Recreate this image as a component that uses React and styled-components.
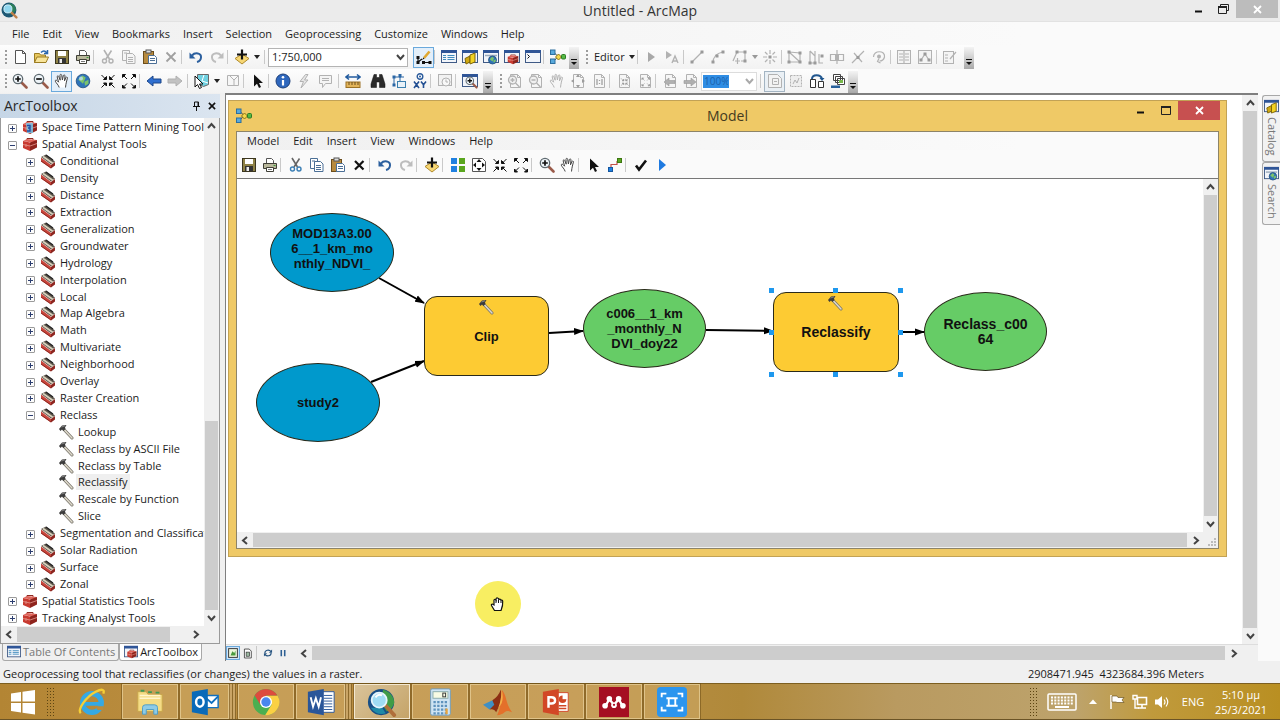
import React from "react";
import styled, { createGlobalStyle, css } from "styled-components";

const Global = createGlobalStyle`
  * { box-sizing: border-box; }
  body { margin: 0; background: #f0f0f0; }
  body, button, input { font-family: "Open Sans", "Noto Sans", sans-serif; font-size: 11px; line-height: 16px; color: #1c1c1c; }
  button { border: 0; padding: 0; margin: 0; background: none; }
  svg { display: block; flex: none; }
`;

/* ---------- icons ---------- */

const G = "#b2b2b2";
const K = "#111";

const page = (stroke = "#555", fill = "#fff") => (
  <path d="M3.5 1.5h7l3 3v10h-10z M10.5 1.5v3h3" fill={fill} stroke={stroke} />
);
const win = (body) => (
  <>
    <rect x="0.5" y="1.5" width="15" height="12" fill="#f2f5fa" stroke="#3f5a86" />
    <rect x="0" y="1" width="16" height="3" fill="#2f5597" />
    {body}
  </>
);
const lens = (sign) => (
  <>
    <path d="M9.5 9.5l5 5" stroke="#9a5b4a" strokeWidth="2.6" strokeLinecap="round" />
    <circle cx="6" cy="6" r="4.7" fill="#eef4f8" stroke="#5f6a70" strokeWidth="1.3" />
    <path d={sign === "+" ? "M3.2 6h5.6M6 3.2v5.6" : "M3.2 6h5.6"} stroke={K} strokeWidth="1.7" />
  </>
);
const hand = (stroke = "#444", fill = "#fff") => (
  <path
    d="M5.2 14.5C4.6 12 2 10 1.3 8.2c-.3-1 .9-1.5 1.7-.6l1.6 1.6L3.2 4c-.3-1.300 1.200-1.700 1.600-.4l1.400 3.600L6 2.300c0-1.300 1.500-1.300 1.700 0l.7 4.700.9-4.300c.3-1.200 1.800-.9 1.700.3l-.5 4.800 1.400-3.300c.5-1 1.800-.5 1.500.6-.6 2.600-1.500 5-1.900 9.400"
    fill={fill} stroke={stroke} strokeLinejoin="round"
  />
);
const cut = (a, b) => (
  <>
    <path d="M4 1l5.500 9M11.500 1.500L6 10" stroke={a} strokeWidth="1.600" fill="none" />
    <circle cx="4.500" cy="12" r="2" fill="none" stroke={b} strokeWidth="1.400" />
    <circle cx="11" cy="12" r="2" fill="none" stroke={b} strokeWidth="1.400" />
  </>
);
const copy = (s, f) => (
  <>
    <path d="M1.500 1.500h7v10h-7z" fill={f} stroke={s} />
    <path d="M5.500 4.500h6l2.500 2.500v7.500h-8.500z" fill={f} stroke={s} />
    <path d="M7 8.500h5M7 10.500h5M7 12.500h5M3 4h3" stroke={s} />
  </>
);
const arrows4 = (dir, c = K) =>
  dir === "in" ? (
    <path fill={c} stroke={c} d="M1.500 2l3.500 3.500M14.500 2L11 5.500M1.500 14.500L5 11M14.500 14.500L11 11M6.500 3.500v3h-3zM9.500 3.500v3h3zM6.500 13v-3h-3zM9.500 13v-3h3z" />
  ) : (
    <path fill={c} stroke={c} d="M6 6L3 3M10 6l3-3M6 10.500l-3 3M10 10.500l3 3M1.500 4.500v-3h3zM14.500 4.500v-3h-3zM1.500 12v3h3zM14.500 12v3h-3z" />
  );
const curl = (c, flip) => (
  <g transform={flip ? "translate(16 0) scale(-1 1)" : undefined}>
    <path d="M4 6.500C7 3 13.500 4 13 8.500 12.800 11 11 12.500 9 13" fill="none" stroke={c} strokeWidth="2" />
    <path d="M1.500 3.500v6h6z" fill={c} />
  </g>
);
const nodeLink = (
  <>
    <path d="M4 3.500L8 7.500 4 12M10 8h3" stroke="#444" fill="none" />
    <rect x="0.500" y="1" width="4.500" height="4.500" fill="#58a9dc" stroke="#2c6f9e" />
    <rect x="0.500" y="10" width="4.500" height="4.500" fill="#58a9dc" stroke="#2c6f9e" />
    <path d="M8.500 5l3 3-3 3-3-3z" fill="#f5d84c" stroke="#8a7514" />
    <rect x="11.500" y="5.500" width="4" height="4.500" rx="1" fill="#55b945" stroke="#2d7a24" />
  </>
);
const box = (
  <>
    <path d="M5 4V2.500h6V4" fill="none" stroke="#8c2b22" />
    <path d="M1 5l4-2 10 1-3 3z" fill="#e0665c" />
    <path d="M1 5l7 1.500V15l-7-3z" fill="#c83a30" />
    <path d="M8 6.500L15 4v7.500L8 15z" fill="#8f241d" />
    <path d="M1 8.500l7 1.500 7-2.500M4 8v3" stroke="#e59a90" strokeWidth=".8" fill="none" />
  </>
);
const arrowPtr = (c = K) => <path d="M4 1.500v12l3-2.800 2 4.300 2-1-2-4h4z" fill={c} />;
const globe = (x, y, r) => (
  <>
    <circle cx={x} cy={y} r={r} fill="#2f74b8" stroke="#1f4c7c" strokeWidth="0.800" />
    <path d={`M${x - r * 0.7} ${y - r * 0.2}l${r * 0.6} ${-r * 0.6} ${r * 0.5} ${r * 0.3} ${-r * 0.4} ${r * 0.9}zM${x + r * 0.2} ${y + r * 0.1}l${r * 0.6} ${-r * 0.3} 0 ${r * 0.6} ${-r * 0.5} ${r * 0.3}z`} fill="#7cc36a" />
  </>
);
const gpage = (inner) => (
  <>
    {page(G, "#f6f6f6")}
    {inner}
  </>
);
const sketch = (d) => <path d={d} fill="none" stroke={G} strokeWidth="1.200" />;
const dot = (x, y, c = "#9a9a9a") => <rect key={`${x}-${y}`} x={x - 1.500} y={y - 1.500} width="3" height="3" fill={c} />;

const icons = {
  newDoc: page("#555"),
  open: (
    <>
      <path d="M1.500 13.500v-9h5l1 1.500h5v7.500z" fill="#e7c75e" stroke="#9c7c22" />
      <path d="M1.500 13.500L4 8h11.500l-2.500 5.500z" fill="#f8e49a" stroke="#9c7c22" />
      <path d="M8 3.500c2-2 4-2 5.500 0M14.500 1v3.500H11" fill="none" stroke="#2a66ad" strokeWidth="1.500" />
    </>
  ),
  save: (
    <>
      <rect x="1.500" y="1.500" width="13" height="13" fill="#8f8246" stroke="#3b3620" />
      <rect x="4" y="2" width="8" height="5" fill="#fff" />
      <rect x="4" y="9" width="8" height="5" fill="#333" />
      <rect x="5.500" y="10" width="2.500" height="4" fill="#eee" />
    </>
  ),
  print: (
    <>
      <path d="M4.500 6V1.500h5l2 2V6" fill="#fff" stroke="#555" />
      <path d="M1.500 6.500h13v5h-13z" fill="#b9b89c" stroke="#3f3f36" />
      <path d="M4.500 10.500h7v4h-7z" fill="#fff" stroke="#3f3f36" />
      <path d="M6 12.500h4" stroke="#777" />
      <rect x="11.500" y="8" width="2" height="1" fill="#3c9a3c" />
    </>
  ),
  cut: cut("#666", "#3c7fb5"),
  cutOff: cut(G, G),
  copy: copy("#4b6f96", "#fff"),
  copyOff: copy(G, "#f5f5f5"),
  paste: (
    <>
      <rect x="1.500" y="2.500" width="10" height="12" fill="#b88b3e" stroke="#6b4d1b" />
      <rect x="4" y="1" width="5" height="3" fill="#ddd" stroke="#555" />
      <path d="M6.500 6.500h6l2 2v6h-8z" fill="#fff" stroke="#4b6f96" />
      <path d="M8 9.500h5M8 11.500h5" stroke="#4b6f96" />
    </>
  ),
  del: <path d="M4 4l8.500 8.500M12.500 4L4 12.500" stroke={K} strokeWidth="2.200" />,
  delOff: <path d="M3.500 3.500l9 9M12.500 3.500l-9 9" stroke="#a0a0a0" strokeWidth="1.800" />,
  undo: curl("#2b5f9e"),
  redo: curl("#bdbdbd", true),
  addData: (
    <>
      <path d="M8 5l7 4.500L8 15 1 9.500z" fill="#f7d774" stroke="#b08a2c" />
      <path d="M8 0.500v10M3 5.500h10" stroke={K} strokeWidth="2.200" />
    </>
  ),
  edTool: (
    <>
      <path d="M2 9v4.500M2 13l4-3M7 13.500h7" stroke={K} strokeWidth="1.200" />
      {dot(2, 8.500, K)}{dot(2, 13.500, K)}{dot(7.500, 13.500, K)}{dot(14, 13.500, K)}
      <path d="M8 9L13.500 2.500" stroke="#e0a830" strokeWidth="2.600" />
      <path d="M6 11l1.500-2.500 1 1z" fill={K} />
    </>
  ),
  toc: win(<path d="M2 6.500h3M2 8.500h3M2 10.500h3M6.500 6.500h7M6.500 8.500h7M6.500 10.500h7" stroke="#3f8bbd" />),
  catalog: win(<><path d="M3 9.500l5-2.500v6l-4 2z" fill="#d0a911" stroke="#7e6508" /><path d="M8 6l5-2v9l-5 2z" fill="#f2d222" stroke="#7e6508" /></>),
  search: win(<><path d="M2 6.500h12" stroke="#9ab" strokeWidth="1.500" />{globe(9.500, 11, 4)}</>),
  tbxWin: win(<g transform="translate(3 4) scale(.75)">{box}</g>),
  python: win(<path d="M2.500 5.500l2 2-2 2" stroke={K} fill="none" />),
  model: nodeLink,
  ptrOff: <path d="M5 3v10l7-5z" fill="#a8a8a8" />,
  ptrA: <><path d="M2 2v8l6-4z" fill={G} /><path d="M8 14l3-7 3 7M9 12h4" stroke={G} strokeWidth="1.400" fill="none" /></>,
  line: <>{sketch("M3 13L13 3")}{dot(3, 13)}{dot(13, 3)}</>,
  arc: <>{sketch("M3 14C3 8 7 4 13 3")}{dot(3, 13)}{dot(7, 7)}{dot(13, 3)}</>,
  poly: <>{sketch("M2 12L6 3h8v9h-4M6.500 9v6M4 12h5")}{dot(6, 3)}{dot(14, 3)}{dot(14, 12)}</>,
  star: <>{sketch("M8 1v4M8 11v4M1 8h4M11 8h4M3 3l2.500 2.500M13 3l-2.500 2.500M3 13l2.500-2.500M13 13l-2.500-2.500")}{dot(8, 8)}</>,
  edV: <>{sketch("M2 3l11 1v9H2zM2 3l11 10")}{dot(2, 3)}{dot(13, 4)}{dot(13, 13)}{dot(2, 13)}</>,
  resh: <>{sketch("M2 2v12h5V2M2 2l5 5M11 5v9h4")}{dot(2, 14)}{dot(7, 14)}{dot(14, 7)}</>,
  cutP: <>{sketch("M1.500 5.500h13v6h-13zM8 1v14")}<rect x="6" y="6" width="4" height="5" fill={G} /></>,
  split: <>{sketch("M2 14L14 2M4 4l8 9")}{dot(8, 8.500)}</>,
  rot: <>{sketch("M2.500 8c0-7 12-7 11 0-1 4-5 4-5 4M8 9.500L6.500 12.500 9.500 14")}<circle cx="8" cy="7.500" r="2" fill={G} /></>,
  attr: <><rect x="1.500" y="1.500" width="13" height="13" fill="#f4f4f4" stroke={G} />{sketch("M3 5h4M3 8h4M3 11h4M9 5h4M9 8h4M9 11h4M8 2v12")}</>,
  skProp: <><rect x="1.500" y="1.500" width="13" height="13" fill="#f4f4f4" stroke={G} />{sketch("M4 11l4-6 4 6")}{dot(4, 11)}{dot(8, 5)}{dot(12, 11)}</>,
  createF: <><rect x="1.500" y="2.500" width="10" height="12" fill="#f4f4f4" stroke={G} />{sketch("M3 6h3M3 9h3M3 12h3M8 10l6-7")}</>,
  zoomIn: lens("+"),
  zoomOut: lens("-"),
  hand: hand(),
  globe: <>{globe(8, 8, 6.800)}<circle cx="6" cy="5.500" r="2" fill="#bfe0f4" opacity=".8" /></>,
  fixIn: arrows4("in"),
  fixOut: arrows4("out"),
  back: <path d="M1 8l6-5v3h8v4H7v3z" fill="#2f6fd0" stroke="#1d4688" />,
  fwdOff: <path d="M15 8L9 3v3H1v4h8v3z" fill="#c2c2c2" stroke="#b0b0b0" />,
  selF: (
    <>
      <path d="M3.500 1.500h11v10l-5 2-6-3z" fill="#6fd0e0" stroke="#666" />
      <path d="M10 2l-2 6 6 2" stroke="#fff" fill="none" />
      <path d="M1 3v11l2.500-2.500L5.500 15.500l2-1-2-3.500H9z" fill="#fff" stroke={K} />
    </>
  ),
  clrSel: <path d="M2.500 2.500h11v10h-11zM5 3l4 4 4-4M9 7v5" fill="#f6f6f6" stroke={G} />,
  ptr: arrowPtr(),
  info: <><circle cx="8" cy="8" r="7" fill="#2e67bd" stroke="#1c3f7a" /><path d="M8 7v5.500" stroke="#fff" strokeWidth="2.200" /><circle cx="8" cy="4.300" r="1.300" fill="#fff" /></>,
  bolt: <path d="M9.500 1.500L4 8.500h3.500L5 15l7-8H8.500l3.500-5.500z" fill="#e6e6e6" stroke={G} />,
  html: <path d="M2.500 2.500h12v8h-6l-3 4v-4h-3zM5 5.500h7M5 7.500h7" fill="#f4f4f4" stroke={G} />,
  measure: <><path d="M1 4h14M4 1.500L1 4l3 2.500M12 1.500L15 4l-3 2.500" stroke="#225b9e" strokeWidth="1.600" fill="none" /><rect x="1" y="9" width="14" height="5.500" fill="#e2b45a" stroke="#9b7124" /><path d="M4 9v3M7 9v3M10 9v3M13 9v3" stroke="#6b4d1b" /></>,
  find: <path d="M4 1.500h2.500v3h3v-3H12l3 9.500v3.500H9.500V9h-3v5.500H1V11z" fill="#2a2a2a" stroke="#111" strokeWidth=".5" />,
  route: <><path d="M3 12V4h6v4M9 2v3M9 4h4" stroke="#2a66a5" fill="none" /><rect x="6.500" y="8.500" width="8" height="6" fill="#e8f1f8" stroke="#3b7fae" />{dot(3, 4, "#2a66a5")}{dot(9, 2.500, "#2a66a5")}{dot(3, 12, "#2a66a5")}</>,
  xy: <><circle cx="8" cy="3.500" r="2.800" fill="#fff" stroke="#2a5b9c" strokeWidth="1.400" /><circle cx="8" cy="3.500" r="1" fill="#2a5b9c" /><path d="M2 8.500l5 6.500M7 8.500L2 15M9 8.500l2.500 3.200L14 8.500M11.500 11.500V15" stroke="#224f92" strokeWidth="1.600" fill="none" /></>,
  time: <><rect x="1.500" y="1.500" width="13" height="11" fill="#f2f2f2" stroke={G} /><circle cx="9" cy="9" r="4" fill="#f8f8f8" stroke={G} /><path d="M9 6.500V9h2" stroke={G} fill="none" /></>,
  viewer: win(<g transform="translate(3 3) scale(.8)">{lens("+")}</g>),
  lZin: gpage(<><circle cx="5.500" cy="7" r="4" fill="#f0f0f0" stroke={G} strokeWidth="1.300" /><path d="M3.500 7h4M5.500 5v4M8.500 10l4 4" stroke={G} strokeWidth="1.400" /></>),
  lZout: gpage(<><circle cx="5.500" cy="7" r="4" fill="#f0f0f0" stroke={G} strokeWidth="1.300" /><path d="M3.500 7h4M8.500 10l4 4" stroke={G} strokeWidth="1.400" /></>),
  lHand: hand(G, "#f6f6f6"),
  lFull: gpage(<path d="M8 1l2 3H6zM8 15l2-3H6zM1 8l3-2v4zM15 8l-3-2v4z" fill="#9c9c9c" />),
  l11: gpage(<path d="M6 6v6M11 6v6M8.500 7v1M8.500 10v1" stroke="#a0a0a0" strokeWidth="1.300" />),
  lIn: gpage(<g transform="translate(4 4) scale(.6)">{arrows4("in", "#999")}</g>),
  lOut: gpage(<g transform="translate(4 4) scale(.6)">{arrows4("out", "#999")}</g>),
  lBack: gpage(<path d="M2 9l5-4v2.500h6v3H7V13z" fill="#b0b0b0" stroke="#999" strokeWidth=".6" />),
  lFwd: gpage(<path d="M13 9L8 5v2.500H1v3h7V13z" fill="#b0b0b0" stroke="#999" strokeWidth=".6" />),
  draft: <><path d="M1.500 1.500h9l4 4v9h-13z" fill="#f3f3f3" stroke={G} /><path d="M5.500 5.500h6v6h-6zM7 8.500h3" stroke={G} fill="none" /></>,
  focus: <><rect x="2.500" y="2.500" width="11" height="11" fill="#eee" stroke={G} strokeDasharray="2 1" /><path d="M5 11l2-4 2 3 2-5" stroke={G} fill="none" /></>,
  change: <><path d="M3 6c0-5 9-5 10 0" fill="none" stroke="#20568e" strokeWidth="2" /><path d="M10.500 5h5L13 8z" fill="#20568e" /><path d="M1.500 6.500h5v8h-5zM9.500 8.500h5v6h-5z" fill="#fff" stroke="#333" /></>,
  ddp: <><path d="M3.500 1.500h7v6h-7zM5.500 3.500h7v6h-7zM7.500 5.500h7v6h-7z" fill="#fff" stroke="#444" /><path d="M9 7h4v3H9z" fill="#78b84a" /><path d="M1 12.500h9v2.500H1z" fill="#27609b" /></>,
  auto: <><path d="M1 1h6v6H1zM1 9h6v6H1z" fill="#2080e0" /><path d="M9 1h6v6H9zM9 9h6v6H9z" fill="#5aa61e" /></>,
  full: <><path d="M1.500 1.500h10l3 3v10h-13z" fill="#fff" stroke="#555" /><path d="M8 2l2.500 3h-5zM8 14l2.500-3h-5zM2 8l3-2.500v5zM14 8l-3-2.500v5z" fill={K} /></>,
  connect: <><path d="M4 12V7.500h6V4" stroke="#c2504a" fill="none" strokeWidth="1.200" /><rect x="1.500" y="10.500" width="4" height="4" fill="#2080e0" stroke="#1557a0" /><rect x="10.500" y="1.500" width="4" height="4" fill="#5aa61e" stroke="#3c7611" /></>,
  check: <path d="M3 8.500l3 4L13 3.500" stroke={K} strokeWidth="2.600" fill="none" />,
  run: <path d="M5 2v12l7-6z" fill="#1f7ae0" />,
  box,
  boxStp: <>{box}<path d="M4 4h7v10H5z" fill="#7bc8e8" opacity=".85" /><path d="M5 6.500h3v2.500H6h2v3H5" stroke="#1e50a8" strokeWidth="1.400" fill="none" /></>,
  set: (
    <>
      <path d="M1 4l5-2.500 9 7-4 3z" fill="#5d564c" />
      <path d="M3 3.500l10 7" stroke="#d8d2bd" strokeWidth="1.600" />
      <path d="M6 2l7 5" stroke="#222" strokeWidth="1.200" />
      <path d="M1 4.500L11 12v3.500L1 8.500z" fill="#c8463c" />
      <path d="M11 12l4-3v3.500l-4 3z" fill="#8d2620" />
      <path d="M1 8l10 7" stroke="#7e1d17" strokeWidth=".8" />
    </>
  ),
  hammer: (
    <>
      <path d="M6 5.500l8 8.500" stroke="#77736a" strokeWidth="3" strokeLinecap="round" />
      <path d="M6.500 6l7.500 8" stroke="#dedacb" strokeWidth="1.500" strokeLinecap="round" />
      <path d="M1 5l3-3.500L8.500 1 7 3.500 7.500 5 5.500 7 4 5.500 2.500 7z" fill="#3c3c3c" />
      <path d="M3.500 3L7 1.800" stroke="#9a9a9a" strokeWidth=".8" />
    </>
  ),
  arcmap: (
    <>
      <circle cx="7.500" cy="7.500" r="7" fill="#1d5874" />
      <path d="M8 1c4 1 6 3 6 7l-4 4-3-2z" fill="#2c7f5a" />
      <path d="M9.500 9.500l5 5" stroke="#c0804a" strokeWidth="2.200" strokeLinecap="round" />
      <circle cx="6.500" cy="6.500" r="3.800" fill="#8fd6ee" stroke="#dcf3fb" strokeWidth=".8" />
    </>
  ),
  refresh: <><path d="M3 8c0-5 7-6 9.500-2.500M13 8c0 5-7 6-9.500 2.500" stroke="#24527f" strokeWidth="1.800" fill="none" /><path d="M14.500 2.500v5h-5zM1.500 13.500v-5h5z" fill="#24527f" /></>,
  pause: <path d="M4 3h2.500v10H4zM9.500 3H12v10H9.500z" fill="#2d5f93" />,
  dataView: <><rect x="1" y="1" width="14" height="14" fill="#eef6dc" stroke="#333" strokeWidth="1.500" /><path d="M4 12l3-7 3 3 2-4v8z" fill="#4a9a3e" /></>,
  layView: <><path d="M3.500 1.500h7l3 3v10h-10z" fill="#fff" stroke="#444" strokeWidth="1.300" /><rect x="6" y="6" width="5" height="6" fill="#9ab8a0" stroke="#333" /></>,
};

const Icon = ({ name, size = 16 }) => (
  <svg width={size} height={size} viewBox="0 0 16 16" aria-hidden="true">{icons[name]}</svg>
);

const Chevron = ({ dir = "down", color = "#444" }) => {
  const d = { up: "M1 6l3.500-4L8 6", down: "M1 2l3.500 4L8 2", left: "M6 1L2 4.500 6 8", right: "M3 1l4 3.500L3 8" }[dir];
  return <svg width="9" height="9" viewBox="0 0 9 9"><path d={d} fill="none" stroke={color} strokeWidth="2" /></svg>;
};

/* ---------- frame ---------- */

const Shell = styled.div`
  min-height: 100vh; display: flex; flex-direction: column; overflow: hidden; background: #f0f0f0;
`;
const TitleBar = styled.header`
  height: 22px; flex: none; background: #ebebeb; border-bottom: 1px solid #e2e2e2;
  display: grid; grid-template-columns: 1fr auto 1fr; align-items: center;
  h1 { margin: 0; font-size: 14px; font-weight: 400; line-height: 20px; color: #333; }
`;
const TitleIcon = styled.div`padding-left: 1px;`;
const WinButtons = styled.div`display: flex; justify-content: flex-end; align-self: start; margin-right: ${(p) => p.$end}px;`;
const WinButton = styled.button`
  width: ${(p) => p.$w || 24}px; height: ${(p) => p.$h || 18}px; background: ${(p) => p.$bg || "none"};
  display: flex; align-items: center; justify-content: center;
`;
const MenuBar = styled.nav`
  display: flex; align-items: center; flex: none; gap: ${(p) => p.$gap}px; height: ${(p) => p.$h}px; padding-left: ${(p) => p.$start}px;
  background: linear-gradient(90deg, #f0f0f0, #fafafa 80%);
`;
const MenuItem = styled.button`font-size: 11px; line-height: 16px;`;
const ToolRow = styled.div`
  display: flex; align-items: center; flex: none; height: 24px; background: #fafafa;
`;
const Band = styled.div`
  display: flex; align-items: center; height: 24px;
  background: linear-gradient(#fdfdfd, #f2f2f2);
`;
const Tool = styled.button`
  width: 21px; height: 21px; display: flex; align-items: center; justify-content: center;
  ${(p) => p.$on && css`background: ${p.$dim ? "#eaf0f5" : "#e3effa"}; box-shadow: inset 0 0 0 1px ${p.$dim ? "#a3b4c2" : "#6aa9dc"};`}
`;
const DropCaret = styled.button`
  width: 10px; height: 21px; display: flex; align-items: center; justify-content: center;
  &::after { content: ""; border: 3px solid transparent; border-top: 4px solid ${(p) => p.$c || "#222"}; border-bottom: 0; }
`;
const Sep = styled.span`width: 4px; height: 14px; border-left: 1px solid #c9c9c9; margin-left: ${(p) => p.$ml || 0}px;`;
const ModelTools = styled.div`
  display: flex; align-items: center; flex: none; height: 28px; padding: 2px 0 0 1px; background: #fafafa;
  ${Sep} { width: 5px; }
`;
const Gap = styled.span`width: ${(p) => p.$w}px; flex: none;`;
const Grip = styled.span`
  width: 2px; height: 14px; margin: 0 ${(p) => p.$r}px 0 ${(p) => p.$l}px;
  background: repeating-linear-gradient(#9c9c9c 0 2px, transparent 2px 4px);
`;
const OverflowButton = styled.button`
  width: 10px; height: 22px; align-self: flex-end; margin-left: ${(p) => p.$ml || 0}px;
  background: linear-gradient(#f4f4f4, #a9a9a9);
  display: flex; align-items: flex-end; justify-content: center; padding-bottom: 3px;
`;
const Overflow = ({ ml }) => (
  <OverflowButton $ml={ml} aria-label="Toolbar options">
    <svg width="6" height="7" viewBox="0 0 6 7"><path d="M0 0.500h6" stroke="#111" /><path d="M0 3h6L3 6z" fill="#111" /></svg>
  </OverflowButton>
);
const Combo = styled.div`
  width: ${(p) => p.$w}px; height: 19px; display: flex; align-items: center; background: #fff;
  border: 1px solid ${(p) => (p.$dim ? "#dcdcdc" : "#b4b4b4")}; margin: 0 ${(p) => p.$mr}px 0 ${(p) => p.$ml}px;
  input { flex: 1; min-width: 0; height: 16px; border: 0; padding: 0 3px; background: none; outline: 0; }
  button { width: 14px; display: flex; justify-content: center; }
`;
const Percent = styled(Combo)`
  input { flex: none; width: 26px; height: 13px; margin-left: 1px; padding: 0 1px; background: #2f8de4; color: #1c62ab; font-size: 10px; }
  button { margin-left: auto; }
`;
const EditorBtn = styled.button`padding: 0 2px 0 0;`;

const Main = styled.div`flex: 1; display: flex; min-height: 0;`;

/* ---------- scroll bars ---------- */

const VBar = styled.div`
  width: ${(p) => p.$w || 15}px; flex: none; background: #f0f0f0; display: flex; flex-direction: column; align-items: center;
`;
const HBar = styled.div`
  height: 16px; flex: 1; background: #f0f0f0; display: flex; align-items: center; min-width: 0;
`;
const SideBar = styled(HBar)`flex: none; height: 17px;`;
const Arrow = styled.button`width: 16px; height: 16px; flex: none; display: flex; align-items: center; justify-content: center;`;
const Thumb = styled.span`background: #cdcdcd; flex: ${(p) => p.$f ?? 1}; align-self: stretch; margin: ${(p) => (p.$v ? "0 1px" : "1px 0")};`;
const Track = styled.span`flex: ${(p) => p.$f};`;
const BarRow = styled.div`display: flex; flex: none;`;

/* ---------- toolbox panel ---------- */

const Side = styled.aside`width: 220px; flex: none; display: flex; flex-direction: column; margin-right: 5px;`;
const SideHead = styled.div`
  height: 24px; flex: none; margin-top: 1px; display: flex; align-items: center; padding: 0 1px 0 4px; background: linear-gradient(90deg, #c6d6e6, #dbe5f0);
  h2 { flex: 1; margin: 0; font-size: 14px; font-weight: 400; line-height: 20px; color: #2a2a2a; }
  button { width: 15px; display: flex; justify-content: center; }
`;
const SideBox = styled.div`flex: 1; display: flex; flex-direction: column; border: 1px solid #9a9a9a; border-width: 0 1px 1px; background: #fff; min-height: 0;`;
const TreeArea = styled.div`flex: 1; display: flex; min-height: 0;`;
const Tree = styled.ul`list-style: none; margin: 0; padding: 1px 0 0; flex: 1; min-width: 0; display: flex; flex-direction: column; overflow: hidden;`;
const TreeRow = styled.li`
  flex: 1; min-height: 0; display: flex; align-items: center; padding-left: ${(p) => 7 + p.$level * 18}px; white-space: nowrap;
`;
const Expander = styled.button`
  width: 9px; height: 9px; flex: none; margin: 2px 5px 0 0; visibility: ${(p) => (p.$none ? "hidden" : "visible")};
  border: 1px solid #9b9b9b; border-radius: 1px; background: #fdfdfd;
`;
const TreeText = styled.span`padding: 0 2px; margin-left: 2px; line-height: 16px; ${(p) => p.$on && css`background: #efefef;`}`;
const Tabs = styled.div`height: 17px; flex: none; display: flex; padding-left: 2px;`;
const Tab = styled.button`
  display: flex; align-items: center; gap: 2px; height: 17px; padding: 0 3px 0 4px; border: 1px solid #a8a8a8; border-top: 0; border-radius: 0 0 3px 3px;
  background: ${(p) => (p.$on ? "#fff" : "#f0f0f0")}; color: ${(p) => (p.$on ? "#1c1c1c" : "#777")};
`;

/* ---------- map area and model window ---------- */

const MapArea = styled.main`
  flex: 1; min-width: 0; display: flex; flex-direction: column; border-top: 2px solid #7f7f7f; border-left: 1px solid #7f7f7f;
`;
const MapBody = styled.div`flex: 1; display: flex; min-height: 0;`;
const MapSheet = styled.div`flex: 1; background: #fff; position: relative;`;
const MapFoot = styled.div`height: 17px; flex: none; display: flex; align-items: center; background: #f0f0f0; border-top: 1px solid #ddd; padding-right: 17px;`;
const ViewBtn = styled.button`
  width: ${(p) => p.$w || 14}px; height: 14px; display: flex; align-items: center; justify-content: center;
  ${(p) => p.$on && css`background: #cfe4f8; box-shadow: inset 0 0 0 1px #6aa9dc;`}
`;
const ModelWin = styled.section`
  position: absolute; left: 2px; right: 15px; top: 5px; height: 457px; border: 1px solid #c2a255;
  background: #efc966; display: flex; flex-direction: column; padding: 0 7px 7px;
`;
const ModelHead = styled.div`
  height: 30px; flex: none; display: grid; grid-template-columns: 1fr auto 1fr; align-items: center;
  h2 { margin: 0; font-size: 14px; font-weight: 400; line-height: 20px; color: #443a20; }
`;
const ModelInner = styled.div`flex: 1; min-height: 0; display: flex; flex-direction: column; border: 1px solid #8d8468; background: #fafafa;`;
const CanvasFrame = styled.div`flex: 1; min-height: 0; display: flex; flex-direction: column; border-top: 1px solid #777; background: #fff;`;
const CanvasTop = styled.div`flex: 1; display: flex; min-height: 0;`;
const Canvas = styled.div`flex: 1; position: relative; overflow: hidden; font-family: "Liberation Sans", Arial, sans-serif;`;
const Links = styled.svg`position: absolute; left: 0; top: 0;`;
const Node = styled.div`
  position: absolute; left: ${(p) => p.$x}px; top: ${(p) => p.$y}px; width: ${(p) => p.$w}px; height: ${(p) => p.$h}px;
  background: ${(p) => p.$c}; border: 1px solid #2a2a1a; border-radius: ${(p) => (p.$tool ? "13px" : "50%")};
  display: flex; align-items: center; justify-content: center; text-align: center; white-space: pre;
  font-weight: 700; font-size: ${(p) => p.$fs || 13}px; line-height: 15px; color: #111; padding-bottom: ${(p) => p.$pb || 0}px;
`;
const NodeIcon = styled.span`position: absolute; top: 2px; left: 50%; margin-left: -9px;`;
const Handle = styled.span`position: absolute; width: 5px; height: 5px; background: #1e98ee; left: ${(p) => p.$x}px; top: ${(p) => p.$y}px;`;
const Halo = styled.div`
  position: absolute; left: 249px; top: 486px; width: 46px; height: 46px; border-radius: 50%; background: #f8ee62;
  display: flex; align-items: center; justify-content: center;
`;

const Dock = styled.aside`width: 22px; flex: none; background: #fafafa; padding: 2px 0 0 4px; display: flex; flex-direction: column;`;
const DockTab = styled.button`
  width: 18px; height: ${(p) => p.$h}px; display: flex; flex-direction: column; align-items: center; gap: 3px; padding-top: 3px;
  border: 1px solid #a8a8a8; border-right: 0; border-radius: 3px 0 0 3px; background: #f2f2f2; color: #777;
  span { writing-mode: vertical-rl; line-height: 14px; }
`;

const Status = styled.footer`
  height: 22px; flex: none; display: flex; align-items: center; justify-content: space-between; padding: 3px 76px 0 3px; background: #f0f0f0;
  white-space: pre;
`;

/* ---------- taskbar ---------- */

const Taskbar = styled.footer`
  height: 37px; flex: none; display: flex; align-items: stretch; border-top: 1px solid #7d5f20; border-bottom: 1px solid #6b5426;
  background: linear-gradient(90deg, #b38534, #b98c3e 12%, #ba8e45 45%, #b0893a 58%, #b99a60 70%, #bda36c 84%, #c09a3c 90%, #b98f22);
`;
const TaskGrip = styled.span`width: 8px; margin: 3px 0; align-self: stretch; background: radial-gradient(#5d4512 40%, transparent 45%) 0 0 / 3px 3px;`;
const Start = styled.button`width: 46px; display: flex; align-items: center; justify-content: center;`;
const Task = styled.button`
  width: ${(p) => (p.$stack ? 49 : 56)}px; margin-right: ${(p) => (p.$stack ? 9 : 2)}px; display: flex; align-items: center; justify-content: center;
  ${(p) => !p.$plain && css`
    background: ${p.$on ? "linear-gradient(135deg, #d9c39a, #c5a468)" : "rgba(214, 180, 116, 0.45)"};
    border: 1px solid ${p.$on ? "#f3e8d0" : "rgba(240, 220, 170, 0.6)"};
    box-shadow: 0 0 0 1px rgba(110, 78, 22, 0.55)${p.$stack ? ", 3px 0 0 0 #caa566, 4px 0 0 0 #8d6a2b, 6px 0 0 0 #caa566, 7px 0 0 0 #8d6a2b" : ""};
  `}
`;
const Tray = styled.div`
  margin-left: auto; display: flex; align-items: center; color: #fff; padding-right: 13px;
  > button { color: #fff; display: flex; justify-content: center; align-items: center; }
`;
const TrayBtn = styled.button`width: ${(p) => p.$w}px; height: 30px;`;
const Clock = styled.button`flex-direction: column; width: 52px; line-height: 15px;`;

const logos = {
  ie: <><ellipse cx="16" cy="17" rx="10" ry="10" fill="none" stroke="#35a9e4" strokeWidth="5.500" /><path d="M8 18h17" stroke="#35a9e4" strokeWidth="4" /><path d="M19 20.500h9v4h-6z" fill="#b98c3e" /><path d="M4 28C0 24 10 10 20 5c6-3 10-3 8 2" fill="none" stroke="#f6cf35" strokeWidth="2.500" /></>,
  explorer: <><path d="M3 5h9l2 3h15v18H3z" fill="#f4dc85" stroke="#c7a54a" /><path d="M5 9h22M5 12h22" stroke="#fff6cf" strokeWidth="1.500" /><path d="M6 4h4M14 5.500h4M22 6h4" stroke="#3f9a55" strokeWidth="2" /><path d="M8 29v-7q0-3 3-3h10q3 0 3 3v7h-4v-5h-8v5z" fill="#8ecbe8" stroke="#4d9cc4" /></>,
  outlook: <><path d="M15 9h15v13H15z" fill="#fff" stroke="#0f6fc0" strokeWidth="1.500" /><path d="M15 10l8 7 7-7" fill="none" stroke="#0f6fc0" strokeWidth="2" /><path d="M2 5l17-3v28L2 27z" fill="#0a6ab8" /><ellipse cx="10.500" cy="16" rx="4" ry="5" fill="none" stroke="#fff" strokeWidth="2.600" /></>,
  chrome: <><circle cx="16" cy="16" r="14" fill="#4caf50" /><path d="M16 9h12.300A14 14 0 0 1 15 30l7-11z" fill="#fbd043" /><path d="M3.900 9A14 14 0 0 1 28.100 9H16L10 19z" fill="#dd4b3e" /><circle cx="16" cy="16" r="6.500" fill="#fff" /><circle cx="16" cy="16" r="5" fill="#4a87ee" /></>,
  word: <><path d="M16 5h14v22H16z" fill="#fff" stroke="#2a5699" /><path d="M19 9h9M19 12h9M19 15h9M19 18h9M19 21h9M19 24h9" stroke="#2a5699" /><path d="M2 5l17-3v28L2 27z" fill="#2a5699" /><path d="M5 11l2.500 10 3-9 3 9L16 11" fill="none" stroke="#fff" strokeWidth="2" /></>,
  arcmap: <><circle cx="15" cy="16" r="14" fill="#174f86" /><path d="M17 3c8 2 12 8 12 14-2 6-5 8-8 9l-5-8z" fill="#3f9c47" /><path d="M4 22c4 6 10 8 16 6l-4-6z" fill="#1f8aa6" /><path d="M19 19l10 11" stroke="#b06f3a" strokeWidth="4" strokeLinecap="round" /><circle cx="13" cy="14" r="8" fill="#9fdcf3" stroke="#e4f5fb" strokeWidth="2" /><path d="M9 11q3-4 7-2" stroke="#fff" strokeWidth="2" fill="none" /></>,
  calc: <><rect x="6" y="2" width="21" height="28" rx="1.500" fill="#cfe4f3" stroke="#6f9dbd" /><rect x="8.500" y="5" width="16" height="7" fill="#f8fbe4" stroke="#8aa" /><rect x="19" y="6.500" width="3" height="4" fill="none" stroke="#333" /><path d="M9 16h15M9 20h15M9 24h15M9 28h15" stroke="#5f93bd" strokeWidth="2.400" strokeDasharray="2.500 1.500" /><path d="M23 23v6" stroke="#e8a33c" strokeWidth="2.500" /></>,
  matlab: <><path d="M0 19l10-5 4 5-7 5z" fill="#3f8fc4" /><path d="M10 14q6-3 9-11l2 12-7 12q-2-4-7-3l5-5z" fill="#8c2f14" /><path d="M20 3q3 3 5 11t6 13q-5-3-8 0t-8 3q4-6 5-27z" fill="#e4702a" /><path d="M20 3q2 8 0 14l-6 10q5-8 6-24z" fill="#f4b047" /></>,
  ppt: <><path d="M16 6h13v20H16z" fill="#fff" stroke="#d24726" /><circle cx="23" cy="13" r="4" fill="#d24726" /><path d="M23 13V8h5v5z" fill="#fff" /><path d="M19 20h8M19 23h8" stroke="#d24726" strokeWidth="1.500" /><path d="M2 5l17-3v28L2 27z" fill="#d24726" /><path d="M8 22V11h3q4 0 4 3.300T11 17.500H8" fill="none" stroke="#fff" strokeWidth="2.600" /></>,
  mendeley: <><path d="M0 0h32v32H0z" fill="#a50f22" /><path d="M7 20l4-7 5 6 5-6 4 7" fill="none" stroke="#fff" strokeWidth="2.500" /><g fill="#fff"><circle cx="6.500" cy="20" r="3" /><circle cx="16" cy="19.500" r="3" /><circle cx="25.500" cy="20" r="3" /><circle cx="11" cy="12.500" r="3" /><circle cx="21" cy="12.500" r="3" /></g><circle cx="16" cy="19" r="1.200" fill="#a50f22" /></>,
  snip: <><rect x="0" y="0" width="32" height="32" rx="4" fill="#2b95ee" /><path d="M5 11V7h5M22 7h5v4M27 21v4h-5M10 25H5v-4M10 12h12M10 20h12M12.500 12v8M19.500 12v8" fill="none" stroke="#fff" strokeWidth="2" /></>,
};
const Logo = ({ name }) => <svg width="30" height="30" viewBox="0 0 32 32" aria-hidden="true">{logos[name]}</svg>;

/* ---------- data ---------- */

const menus = ["File", "Edit", "View", "Bookmarks", "Insert", "Selection", "Geoprocessing", "Customize", "Windows", "Help"];
const modelMenus = ["Model", "Edit", "Insert", "View", "Windows", "Help"];
const l1 = (name, open) => ({ level: 1, name, icon: "set", open });
const l2 = (name, on) => ({ level: 2, name, icon: "hammer", leaf: true, on });
const tree = [
  { level: 0, name: "Space Time Pattern Mining Tool", icon: "boxStp" },
  { level: 0, name: "Spatial Analyst Tools", icon: "box", open: true },
  ...["Conditional", "Density", "Distance", "Extraction", "Generalization", "Groundwater", "Hydrology", "Interpolation", "Local", "Map Algebra", "Math", "Multivariate", "Neighborhood", "Overlay", "Raster Creation"].map((n) => l1(n)),
  l1("Reclass", true),
  l2("Lookup"), l2("Reclass by ASCII File"), l2("Reclass by Table"), l2("Reclassify", true), l2("Rescale by Function"), l2("Slice"),
  ...["Segmentation and Classificat", "Solar Radiation", "Surface", "Zonal"].map((n) => l1(n)),
  { level: 0, name: "Spatial Statistics Tools", icon: "box" },
  { level: 0, name: "Tracking Analyst Tools", icon: "box" },
];

const Tools = ({ names }) =>
  names.map((n, i) => {
    if (n === "|") return <Sep key={i} />;
    if (n === "v") return <DropCaret key={i} aria-label="More" />;
    if (n === "V") return <DropCaret key={i} $c="#999" aria-label="More" />;
    const on = n.startsWith("*");
    const dim = n.startsWith("*~");
    const name = n.replace(/^\*~?/, "");
    return <Tool key={i} $on={on} $dim={dim} aria-label={name}><Icon name={name} /></Tool>;
  });

const Minus = () => <svg width="9" height="9" viewBox="0 0 9 9"><path d="M1 6.500h7" stroke="#111" strokeWidth="2" /></svg>;
const Cross = ({ c, s = 9 }) => <svg width={s} height={s} viewBox="0 0 9 9"><path d="M1 1l7 7M8 1L1 8" stroke={c} strokeWidth="1.800" /></svg>;

function Toolbars() {
  return (
    <>
      <ToolRow>
        <Band>
          <Grip $l={5} $r={2} />
          <Tools names={["newDoc", "open", "save", "print", "|", "cutOff", "copyOff", "paste", "delOff", "|", "undo", "redo", "|", "addData", "v"]} />
          <Sep $ml={2} />
          <Combo $w={140} $ml={0} $mr={5}><input aria-label="Map scale" defaultValue="1:750,000" /><button aria-label="Scale list"><Chevron /></button></Combo>
          <Tools names={["*edTool", "|", "toc", "catalog", "search", "tbxWin", "python", "|", "model"]} />
          <Overflow ml={1} />
          <Grip $l={7} $r={6} />
          <EditorBtn>Editor</EditorBtn>
          <DropCaret aria-label="Editor menu" />
          <Tools names={["|", "ptrOff", "ptrA", "|", "line", "arc", "poly", "V", "star", "|", "edV", "resh", "cutP", "split", "rot", "|", "attr", "skProp", "|", "createF"]} />
          <Overflow ml={3} />
        </Band>
      </ToolRow>
      <ToolRow>
        <Band>
          <Grip $l={5} $r={2} />
          <Tools names={["zoomIn", "zoomOut", "*hand", "globe"]} />
          <Gap $w={4} />
          <Tools names={["fixIn", "fixOut", "|", "back", "fwdOff"]} />
          <Sep $ml={2} />
          <Tools names={["selF", "v", "clrSel", "|", "ptr", "|", "info", "bolt", "html"]} />
          <Sep $ml={3} />
          <Tools names={["measure"]} />
          <Gap $w={4} />
          <Tools names={["find", "route", "xy", "|", "time", "|", "viewer"]} />
          <Overflow ml={3} />
          <Grip $l={7} $r={2} />
          <Tools names={["lZin", "lZout", "lHand", "lFull", "l11", "|", "lIn", "lOut", "|", "lBack", "lFwd"]} />
          <Percent $w={56} $ml={0} $mr={3} $dim><input aria-label="Zoom percent" defaultValue="100%" /><button aria-label="Zoom list"><Chevron color="#aaa" /></button></Percent>
          <Tools names={["|", "*~draft", "focus", "change", "ddp"]} />
          <Overflow />
        </Band>
      </ToolRow>
    </>
  );
}

function Toolbox() {
  return (
    <Side>
      <SideHead>
        <h2>ArcToolbox</h2>
        <button aria-label="Pin"><svg width="9" height="10" viewBox="0 0 9 10"><path d="M2.500 1h4v4.500M2.500 1v4.500M1 5.500h7M4.500 6v4M6 1v4" stroke="#111" fill="none" /></svg></button>
        <button aria-label="Close"><Cross c="#111" s={8} /></button>
      </SideHead>
      <SideBox>
        <TreeArea>
          <Tree>
            {tree.map((r) => (
              <TreeRow key={r.name} $level={r.level}>
                <Expander $none={r.leaf} aria-label={r.open ? "Collapse" : "Expand"}>
                  <svg width="7" height="7" viewBox="0 0 7 7"><path d={r.open ? "M1 3.500h5" : "M1 3.500h5M3.500 1v5"} stroke="#2c3e70" /></svg>
                </Expander>
                <Icon name={r.icon} />
                <TreeText $on={r.on}>{r.name}</TreeText>
              </TreeRow>
            ))}
          </Tree>
          <VBar>
            <Arrow aria-label="Scroll up"><Chevron dir="up" /></Arrow>
            <Track $f={287} />
            <Thumb $v $f={189} />
            <Arrow aria-label="Scroll down"><Chevron dir="down" /></Arrow>
          </VBar>
        </TreeArea>
        <SideBar>
          <Arrow aria-label="Scroll left"><Chevron dir="left" /></Arrow>
          <Thumb $f={153} />
          <Track $f={17} />
          <Arrow aria-label="Scroll right"><Chevron dir="right" /></Arrow>
          <Gap $w={16} />
        </SideBar>
      </SideBox>
      <Tabs>
        <Tab><Icon name="toc" size={14} />Table Of Contents</Tab>
        <Tab $on><Icon name="tbxWin" size={14} />ArcToolbox</Tab>
      </Tabs>
    </Side>
  );
}

const links = ["M142 99L187 124", "M134 203L187 182", "M312 154L346 152", "M469 151L536 152", "M662 153L687 153"];
const handles = [[532, 109], [596, 109], [661, 109], [532, 151], [661, 151], [532, 193], [596, 193], [661, 193]];

function ModelWindow() {
  return (
    <ModelWin>
      <ModelHead>
        <Icon name="model" />
        <h2>Model</h2>
        <WinButtons $end={-1}>
          <WinButton $w={26} $h={19} aria-label="Minimize"><Minus /></WinButton>
          <WinButton $w={25} $h={19} aria-label="Maximize"><svg width="10" height="9" viewBox="0 0 10 9"><path d="M.5 1h9v7.500h-9z" fill="none" stroke="#222" /><path d="M0 1h10" stroke="#222" strokeWidth="2" /></svg></WinButton>
          <WinButton $w={42} $h={19} $bg="#c75050" aria-label="Close"><Cross c="#fff" /></WinButton>
        </WinButtons>
      </ModelHead>
      <ModelInner>
        <MenuBar $h={18} $gap={14} $start={10}>{modelMenus.map((m) => <MenuItem key={m}>{m}</MenuItem>)}</MenuBar>
        <ModelTools>
          <Tools names={["save", "print", "|", "cut", "copy", "paste", "del", "|", "undo", "redo", "|", "addData", "|", "auto", "full", "fixIn", "fixOut", "|", "zoomIn", "hand", "|", "ptr", "connect", "|", "check", "run"]} />
        </ModelTools>
        <CanvasFrame>
          <CanvasTop>
            <Canvas>
              <Links width="830" height="300" viewBox="0 0 830 300">
                <defs>
                  <marker id="head" markerUnits="userSpaceOnUse" markerWidth="10" markerHeight="8" refX="9" refY="4" orient="auto"><path d="M0 .5L10 4 0 7.500z" fill="#000" /></marker>
                </defs>
                {links.map((d) => <path key={d} d={d} stroke="#000" strokeWidth="2" markerEnd="url(#head)" />)}
              </Links>
              <Node $x={33} $y={34} $w={124} $h={79} $c="#0099cc" $pb={8}>{"MOD13A3.00\n6__1_km_mo\nnthly_NDVI_"}</Node>
              <Node $x={19} $y={184} $w={124} $h={79} $c="#0099cc">study2</Node>
              <Node $x={187} $y={117} $w={125} $h={80} $c="#fdcb33" $tool><NodeIcon><Icon name="hammer" /></NodeIcon>Clip</Node>
              <Node $x={346} $y={110} $w={123} $h={79} $c="#66cc66">{"c006__1_km\n_monthly_N\nDVI_doy22"}</Node>
              <Node $x={536} $y={113} $w={126} $h={80} $c="#fdcb33" $tool $fs={14}><NodeIcon><Icon name="hammer" /></NodeIcon>Reclassify</Node>
              <Node $x={687} $y={113} $w={123} $h={79} $c="#66cc66" $fs={14}>{"Reclass_c00\n64"}</Node>
              {handles.map(([x, y]) => <Handle key={`${x} ${y}`} $x={x} $y={y} />)}
            </Canvas>
            <VBar>
              <Arrow aria-label="Scroll up"><Chevron dir="up" /></Arrow>
              <Thumb $v />
              <Arrow aria-label="Scroll down"><Chevron dir="down" /></Arrow>
            </VBar>
          </CanvasTop>
          <BarRow>
            <HBar>
              <Arrow aria-label="Scroll left"><Chevron dir="left" /></Arrow>
              <Thumb />
              <Arrow aria-label="Scroll right"><Chevron dir="right" /></Arrow>
            </HBar>
            <svg width="15" height="16" viewBox="0 0 15 16"><rect width="15" height="16" fill="#f0f0f0" /><path d="M11 6h2v2h-2zM11 9h2v2h-2zM11 12h2v2h-2zM8 9h2v2H8zM8 12h2v2H8zM5 12h2v2H5z" fill="#bbb" /></svg>
          </BarRow>
        </CanvasFrame>
      </ModelInner>
    </ModelWin>
  );
}

export default function App() {
  return (
    <Shell>
      <Global />
      <TitleBar>
        <TitleIcon><Icon name="arcmap" size={17} /></TitleIcon>
        <h1>Untitled - ArcMap</h1>
        <WinButtons $end={2}>
          <WinButton aria-label="Minimize"><Minus /></WinButton>
          <WinButton $w={26} aria-label="Restore"><svg width="11" height="10" viewBox="0 0 11 10"><path d="M2.500 2V.5h8v6H9" fill="none" stroke="#222" /><path d="M.5 3h8v6.500h-8z" fill="none" stroke="#222" /><path d="M0 3h9" stroke="#222" strokeWidth="2" /></svg></WinButton>
          <WinButton $w={42} $bg="#bcbcbc" aria-label="Close"><Cross c="#fff" /></WinButton>
        </WinButtons>
      </TitleBar>
      <MenuBar $h={23} $gap={13} $start={12}>{menus.map((m) => <MenuItem key={m}>{m}</MenuItem>)}</MenuBar>
      <Toolbars />
      <Main>
        <Toolbox />
        <MapArea>
          <MapBody>
            <MapSheet>
              <ModelWindow />
              <Halo><svg width="16" height="16" viewBox="0 0 16 16"><path d="M4.500 14.500L1.500 9.500q-.5-1.500 1-1.500l1.500 1V4q1-1.500 2 0 0-2.500 1.500-2t1.500 1.500q1.500-1 2 .8 1.500-.6 1.700 1 .4 4-1.700 9.200z" fill="#fff" stroke="#111" strokeWidth="1.200" /><path d="M6 4v3M8.500 3.500V7M11 4.500V7" stroke="#111" /></svg></Halo>
            </MapSheet>
            <VBar $w={16}>
              <Arrow aria-label="Scroll up"><Chevron dir="up" /></Arrow>
              <Thumb $v />
              <Arrow aria-label="Scroll down"><Chevron dir="down" /></Arrow>
            </VBar>
          </MapBody>
          <MapFoot>
            <ViewBtn $on aria-label="Data view"><Icon name="dataView" size={10} /></ViewBtn>
            <ViewBtn aria-label="Layout view"><Icon name="layView" size={11} /></ViewBtn>
            <Sep $ml={2} />
            <ViewBtn $w={16} aria-label="Refresh"><Icon name="refresh" size={10} /></ViewBtn>
            <ViewBtn aria-label="Pause drawing"><Icon name="pause" size={10} /></ViewBtn>
            <Gap $w={6} />
            <HBar>
              <Arrow aria-label="Scroll left"><Chevron dir="left" /></Arrow>
              <Thumb />
              <Arrow aria-label="Scroll right"><Chevron dir="right" /></Arrow>
            </HBar>
          </MapFoot>
        </MapArea>
        <Dock>
          <DockTab $h={67}><Icon name="catalog" size={15} /><span>Catalog</span></DockTab>
          <DockTab $h={63}><Icon name="search" size={15} /><span>Search</span></DockTab>
        </Dock>
      </Main>
      <Status>
        <span>Geoprocessing tool that reclassifies (or changes) the values in a raster.</span>
        <span>2908471.945  4323684.396 Meters</span>
      </Status>
      <Taskbar>
        <Start aria-label="Start"><svg width="26" height="26" viewBox="0 0 26 26"><path d="M1 4.500l10-1.500v9.500H1zM12.500 2.800L25 1v11.500H12.500zM1 14h10v9.500L1 22zM12.500 14H25v11.500l-12.500-1.800z" fill="#fff" /></svg></Start>
        <TaskGrip />
        <Gap $w={10} />
        <Task $plain aria-label="Internet Explorer"><Logo name="ie" /></Task>
        <Task aria-label="File Explorer"><Logo name="explorer" /></Task>
        <Task $stack aria-label="Outlook"><Logo name="outlook" /></Task>
        <Task aria-label="Chrome"><Logo name="chrome" /></Task>
        <Task $stack aria-label="Word"><Logo name="word" /></Task>
        <Task $on aria-label="ArcMap"><Logo name="arcmap" /></Task>
        <Task aria-label="Calculator"><Logo name="calc" /></Task>
        <Task aria-label="Matlab"><Logo name="matlab" /></Task>
        <Task aria-label="PowerPoint"><Logo name="ppt" /></Task>
        <Task aria-label="Mendeley"><Logo name="mendeley" /></Task>
        <Task aria-label="Screen capture"><Logo name="snip" /></Task>
        <Tray>
          <TaskGrip />
          <TrayBtn $w={50} aria-label="Keyboard"><svg width="30" height="18" viewBox="0 0 30 18"><rect x="1" y="1" width="28" height="16" rx="1" fill="none" stroke="#fff" strokeWidth="1.500" /><path d="M4 4.500h22M4 7.500h22M4 10.500h22" stroke="#fff" strokeWidth="2" strokeDasharray="2 1.300" /><path d="M8 14h14" stroke="#fff" strokeWidth="2" /></svg></TrayBtn>
          <TrayBtn $w={12} aria-label="Show hidden icons"><svg width="8" height="5" viewBox="0 0 8 5"><path d="M0 5l4-4.500L8 5z" fill="#fff" /></svg></TrayBtn>
          <Gap $w={6} />
          <TrayBtn $w={24} aria-label="Action center"><svg width="16" height="16" viewBox="0 0 16 16"><path d="M2 1v14" stroke="#fff" strokeWidth="1.500" /><path d="M3 2h5l1 1.500h6l-2 2.500 2 2.500H8L7 8H3z" fill="#fff" stroke="#5d4512" strokeWidth=".6" /></svg></TrayBtn>
          <TrayBtn $w={22} aria-label="Network"><svg width="16" height="16" viewBox="0 0 16 16"><path d="M5.500 3.500h9v7h-9zM10 11v2.500M6 14h8" fill="none" stroke="#fff" strokeWidth="1.600" /><path d="M1 1.500h4v3.500H1zM3 5v9h4" fill="none" stroke="#fff" strokeWidth="1.400" /></svg></TrayBtn>
          <TrayBtn $w={22} aria-label="Volume"><svg width="16" height="16" viewBox="0 0 16 16"><path d="M1 5.500h3L8 2v12L4 10.500H1z" fill="#fff" /><path d="M10 5.500q2 2.500 0 5M12 3.500q3.500 4.500 0 9" fill="none" stroke="#fff" strokeWidth="1.200" /></svg></TrayBtn>
          <Gap $w={8} />
          <TrayBtn $w={24}>ENG</TrayBtn>
          <Gap $w={10} />
          <Clock><span>5:10 μμ</span><span>25/3/2021</span></Clock>
        </Tray>
      </Taskbar>
    </Shell>
  );
}
